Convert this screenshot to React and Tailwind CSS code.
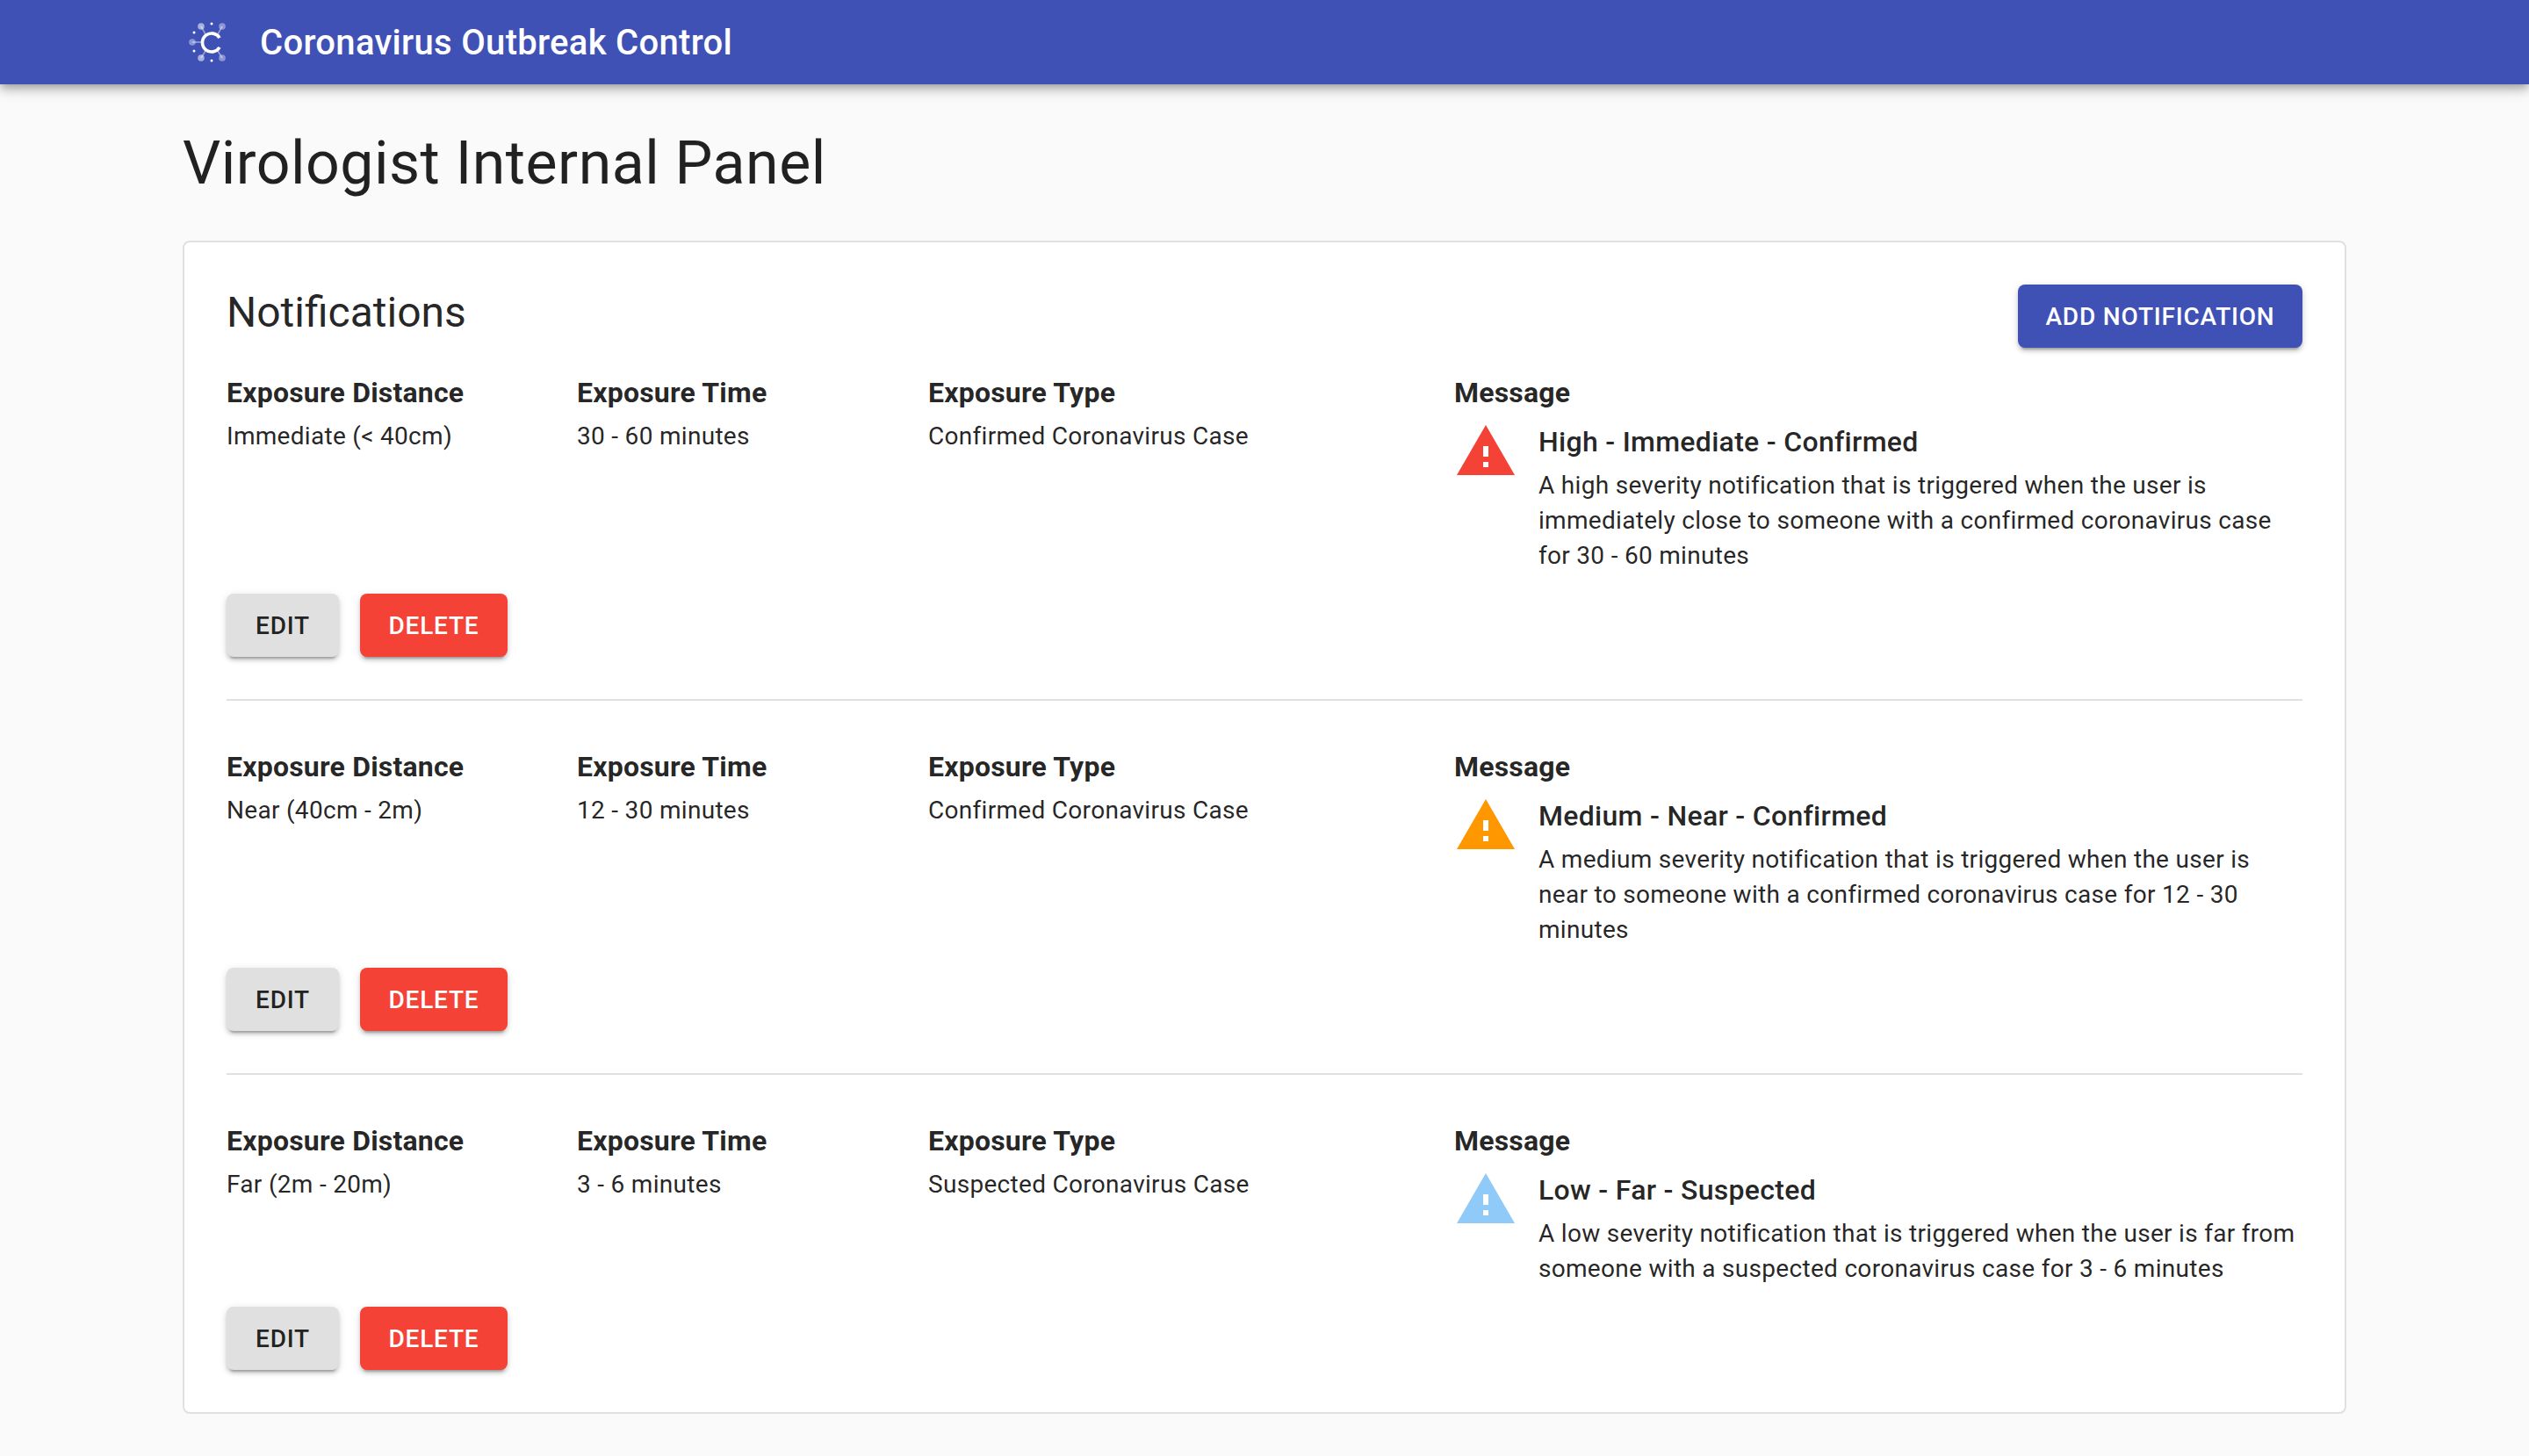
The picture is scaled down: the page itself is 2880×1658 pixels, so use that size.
import React from 'react';

const notifications = [
  {
    distance: 'Immediate (< 40cm)',
    time: '30 - 60 minutes',
    type: 'Confirmed Coronavirus Case',
    title: 'High - Immediate - Confirmed',
    text: 'A high severity notification that is triggered when the user is immediately close to someone with a confirmed coronavirus case for 30 - 60 minutes',
    color: 'text-[#f44336]',
  },
  {
    distance: 'Near (40cm - 2m)',
    time: '12 - 30 minutes',
    type: 'Confirmed Coronavirus Case',
    title: 'Medium - Near - Confirmed',
    text: 'A medium severity notification that is triggered when the user is near to someone with a confirmed coronavirus case for 12 - 30 minutes',
    color: 'text-[#ff9800]',
  },
  {
    distance: 'Far (2m - 20m)',
    time: '3 - 6 minutes',
    type: 'Suspected Coronavirus Case',
    title: 'Low - Far - Suspected',
    text: 'A low severity notification that is triggered when the user is far from someone with a suspected coronavirus case for 3 - 6 minutes',
    color: 'text-[#90caf9]',
  },
];

const raisedShadow = 'shadow-[0_6px_2px_-4px_rgba(0,0,0,0.2),0_4px_4px_0_rgba(0,0,0,0.14),0_2px_10px_0_rgba(0,0,0,0.12)]';

const Logo = () => (
  <svg width="64" height="64" viewBox="0 0 64 64" className="shrink-0">
    <g stroke="#fff" strokeOpacity="0.45" strokeWidth="1.6" fill="none">
      <path d="M26 23 L21 14" />
      <path d="M40 23 L45 14" />
      <path d="M22 32 L11 32" />
      <path d="M26 42 L21 50" />
      <path d="M40 42 L45 50" />
    </g>
    <circle cx="21" cy="14" r="3.8" fill="#fff" fillOpacity="0.55" />
    <circle cx="45" cy="14" r="3.8" fill="#fff" fillOpacity="0.4" />
    <circle cx="11" cy="32" r="3.8" fill="#fff" fillOpacity="0.4" />
    <circle cx="21" cy="50" r="3.8" fill="#fff" fillOpacity="0.55" />
    <circle cx="45" cy="50" r="3.8" fill="#fff" fillOpacity="0.4" />
    <circle cx="33" cy="11" r="1.5" fill="#fff" />
    <circle cx="33" cy="53" r="1.5" fill="#fff" />
    <circle cx="13" cy="21" r="1.5" fill="#fff" />
    <circle cx="13" cy="42" r="1.5" fill="#fff" />
    <path d="M42 27.1 A10.5 10.5 0 1 0 42 37.9" stroke="#fff" strokeWidth="3.6" fill="none" />
  </svg>
);

const WarningIcon = ({ className }) => (
  <svg width="72" height="72" viewBox="0 0 24 24" fill="currentColor" className={className}>
    <path d="M1 21h22L12 2 1 21zm12-3h-2v-2h2v2zm0-4h-2v-4h2v4z" />
  </svg>
);

const Button = ({ className, children }) => (
  <button className={`h-[72px] pt-px rounded-lg text-[28px] font-medium tracking-[0.8px] ${raisedShadow} ${className}`}>
    {children}
  </button>
);

const Field = ({ label, value, className }) => (
  <div className={className}>
    <h3 className="text-[32px] font-bold leading-[48px] tracking-[0.2px]">{label}</h3>
    <p className="text-[28px] leading-10 tracking-[0.3px] mt-[6px]">{value}</p>
  </div>
);

const Notification = ({ item, last }) => (
  <div className={last ? '' : 'border-b-2 border-[#e0e0e0] pb-12 mb-[51px]'}>
    <div className="flex">
      <Field label="Exposure Distance" value={item.distance} className="w-[399px]" />
      <Field label="Exposure Time" value={item.time} className="w-[400px]" />
      <Field label="Exposure Type" value={item.type} className="w-[599px]" />
      <div className="flex-1">
        <h3 className="text-[32px] font-bold leading-[48px] tracking-[0.2px]">Message</h3>
        <div className="flex gap-6 mt-[7px]">
          <WarningIcon className={`shrink-0 ${item.color}`} />
          <div className="pt-[5px]">
            <h4 className="text-[32px] font-medium leading-10 tracking-[0.3px]">{item.title}</h4>
            <p className="text-[28px] leading-10 tracking-[0.3px] mt-[10px]">{item.text}</p>
          </div>
        </div>
      </div>
    </div>
    <div className="flex gap-6 mt-[23px]">
      <Button className="w-[128px] bg-[#e0e0e0] text-black/87">EDIT</Button>
      <Button className="w-[168px] bg-[#f44336] text-white">DELETE</Button>
    </div>
  </div>
);

export default function App() {
  return (
    <div className="min-h-screen bg-[#fafafa] text-black/87 font-['Roboto',sans-serif]">
      <header className="h-24 bg-[#3f51b5] text-white flex items-center pl-[208px] gap-6 shadow-[0_4px_8px_-2px_rgba(0,0,0,0.2),0_8px_10px_0_rgba(0,0,0,0.14),0_2px_20px_0_rgba(0,0,0,0.12)]">
        <Logo />
        <span className="text-[40px] font-medium tracking-[0.3px] pt-[2px]">Coronavirus Outbreak Control</span>
      </header>
      <main className="px-[208px]">
        <h1 className="text-[68px] leading-[80px] tracking-[0.5px] pt-[50px]">Virologist Internal Panel</h1>
        <section className="mt-12 bg-white border-2 border-[#e0e0e0] rounded-lg px-12 pt-12 pb-12">
          <div className="flex items-center justify-between mb-[27px]">
            <h2 className="text-[48px] leading-[64px] pb-2">Notifications</h2>
            <Button className="w-[324px] bg-[#3f51b5] text-white">ADD NOTIFICATION</Button>
          </div>
          {notifications.map((item, i) => (
            <Notification key={item.title} item={item} last={i === notifications.length - 1} />
          ))}
        </section>
      </main>
    </div>
  );
}
